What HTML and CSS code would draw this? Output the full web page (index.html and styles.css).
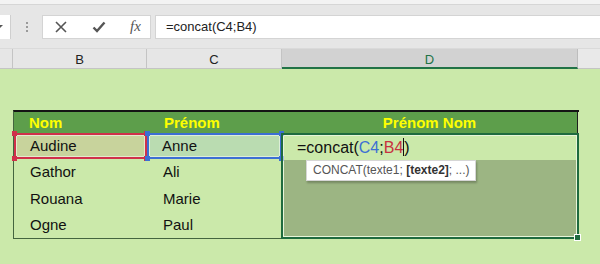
FILE: index.html
```html
<!DOCTYPE html>
<html>
	<head>
		<meta charset="utf-8">
		<title>Concat</title>
		<link rel="stylesheet" href="styles.css">
	</head>
	<body>
		<div class="ribbon-edge"></div>
		<div class="formula-bar">
			<div class="name-box"><span class="caret"></span></div>
			<div class="grip"><i></i><i></i><i></i></div>
			<div class="fx-buttons">
				<svg class="btn-x" width="12" height="12" viewBox="0 0 12 12"><path d="M1 1L11 11M11 1L1 11" stroke="#555" stroke-width="1.6" fill="none"/></svg>
				<svg class="btn-ok" width="14" height="12" viewBox="0 0 14 12"><path d="M1.5 6.5L5 10L12.5 1.5" stroke="#555" stroke-width="2.4" fill="none"/></svg>
				<span class="btn-fx">fx</span>
			</div>
			<div class="formula-input">=concat(C4;B4)</div>
		</div>
		<div class="col-headers">
			<div class="ch ch-a"></div>
			<div class="ch">B</div>
			<div class="ch">C</div>
			<div class="ch ch-sel">D</div>
			<div class="ch ch-e"></div>
		</div>
		<div class="sheet">
			<div class="grid">
				<div class="th">Nom</div>
				<div class="th">Prénom</div>
				<div class="th th-d">Prénom Nom</div>

				<div class="td ref ref-red">Audine<span class="h tl"></span><span class="h tr"></span><span class="h bl"></span><span class="h br"></span></div>
				<div class="td ref ref-blue">Anne<span class="h tl"></span><span class="h tr"></span><span class="h bl"></span><span class="h br"></span></div>
				<div class="sel">
					<div class="edit">=concat(<span class="c-blue">C4</span>;<span class="c-red">B4</span><span class="cursor"></span>)</div>
					<div class="dim"></div>
					<div class="tip">CONCAT(texte1; <b>[texte2]</b>; ...)</div>
					<span class="fill-handle"></span>
				</div>

				<div class="td">Gathor</div>
				<div class="td">Ali</div>
				<div class="td">Rouana</div>
				<div class="td">Marie</div>
				<div class="td">Ogne</div>
				<div class="td">Paul</div>
			</div>
		</div>
	</body>
</html>
```

FILE: styles.css
```css
body{
	margin:0;
	width:600px;
	height:264px;
	overflow:hidden;
	background:#cbe9aa;
	font-family:"Liberation Sans",Arial,sans-serif;
}

.ribbon-edge{
	height:4px;
	background:#f3f3f3;
	border-bottom:1px solid #d6d6d6;
}

.formula-bar{
	display:flex;
	align-items:stretch;
	height:24px;
	padding:10px 0 9px 0;
	background:#e6e6e6;
}

.name-box{
	width:10px;
	background:#fff;
	border-right:1px solid #cfcfcf;
	position:relative;
}

.caret{
	position:absolute;
	left:0;
	top:10px;
	border-left:3px solid transparent;
	border-right:3px solid transparent;
	border-top:3px solid #555;
	margin-left:-3px;
}

.grip{
	width:31px;
	display:flex;
	flex-direction:column;
	align-items:center;
	justify-content:center;
	gap:2px;
}

.grip i{
	display:block;
	width:2px;
	height:2px;
	background:#9a9a9a;
}

.fx-buttons{
	width:109px;
	background:#fff;
	border:1px solid #d4d4d4;
	display:flex;
	align-items:center;
	box-sizing:border-box;
	padding-left:12px;
}

.btn-x{
	margin-right:25px;
}

.btn-ok{
	margin-right:24px;
}

.btn-fx{
	font-family:"Liberation Serif",serif;
	font-style:italic;
	font-size:15px;
	color:#555;
	margin-top:-2px;
}

.formula-input{
	flex:1;
	margin-left:4px;
	background:#fff;
	border:1px solid #d4d4d4;
	border-right:none;
	font-size:13px;
	line-height:22px;
	padding-left:10px;
	color:#222;
}

.col-headers{
	display:flex;
	height:19px;
	background:#e6e6e6;
	border-top:1px solid #dadada;
	border-bottom:1px solid #c4c4c4;
	box-sizing:content-box;
}

.ch{
	box-sizing:border-box;
	border-right:1px solid #c4c4c4;
	font-size:13px;
	line-height:21px;
	text-align:center;
	color:#222;
}

.ch-a{width:13px;}
.col-headers .ch:nth-child(2){width:134px;}
.col-headers .ch:nth-child(3){width:135px;}

.ch-sel{
	width:296px;
	background:#d2d2d2;
	color:#217346;
	border-bottom:2px solid #217346;
	margin-bottom:-1px;
	border-right:1px solid #bdbdbd;
}

.ch-e{
	flex:1;
	border-right:none;
	background:#e9e9e9;
}

.sheet{
	padding:41px 0 0 13px;
}

.grid{
	display:grid;
	grid-template-columns:133px 135px 296px;
	grid-template-rows:21px repeat(4,26.25px);
	width:565px;
	border-top:2px solid #141414;
	border-left:1px solid #44653f;
	border-bottom:1px solid #44653f;
}

.th{
	background:#5d9e4b;
	color:#ffff00;
	font-weight:bold;
	font-size:15px;
	line-height:21px;
	padding-left:15px;
}

.th:nth-child(2){
	padding-left:17px;
}

.th-d{
	padding-left:0;
	text-align:center;
	border-right:1px solid #1e1e1e;
}

.td{
	font-size:15px;
	line-height:26px;
	padding-left:15px;
	color:#111;
}

.grid .td:nth-child(even){
	padding-left:16px;
}

.grid .td:nth-child(n+7):nth-child(odd){
	padding-left:16px;
}

.ref{
	position:relative;
}

.ref-red{
	background:#c8d39c;
	box-shadow:inset 0 0 0 2px #d0304a,inset 0 0 0 3px rgba(255,255,255,.5);
	padding-left:15px;
}

.ref-blue{
	background:#badcb1;
	box-shadow:inset 0 0 0 2px #3c6fd4,inset 0 0 0 3px rgba(255,255,255,.5);
}

.h{
	position:absolute;
	width:5px;
	height:5px;
}

.ref-red .h{background:#d0304a;}
.ref-blue .h{background:#3c6fd4;}

.tl{left:-2px;top:-2px;}
.tr{right:-2px;top:-2px;}
.bl{left:-2px;bottom:-2px;}
.br{right:-2px;bottom:-2px;}

.sel{
	grid-column:3;
	grid-row:2 / span 4;
	position:relative;
	border:2px solid #1f6b3f;
	margin:0 -1px -1px -1px;
	box-shadow:inset 0 0 0 1px rgba(255,255,255,.55);
	display:flex;
	flex-direction:column;
}

.edit{
	height:25px;
	font-size:16px;
	line-height:25px;
	padding-left:14px;
	color:#111;
}

.c-blue{color:#3c6fd4;}
.c-red{color:#c8303f;}

.cursor{
	display:inline-block;
	width:1px;
	height:18px;
	background:#111;
	vertical-align:-3px;
}

.dim{
	flex:1;
	background:#9cb583;
	margin:0 1px 1px 1px;
}

.tip{
	position:absolute;
	left:23px;
	top:25px;
	width:170px;
	height:21px;
	box-sizing:border-box;
	background:#fff;
	border:1px solid #d6d6d6;
	box-shadow:1px 2px 2px rgba(0,0,0,.25);
	font-size:12px;
	line-height:19px;
	padding-left:6px;
	color:#555;
	white-space:nowrap;
}

.tip b{
	color:#333;
}

.fill-handle{
	position:absolute;
	right:-4px;
	bottom:-4px;
	width:5px;
	height:5px;
	background:#1f6b3f;
	border:1px solid #fff;
}
```
